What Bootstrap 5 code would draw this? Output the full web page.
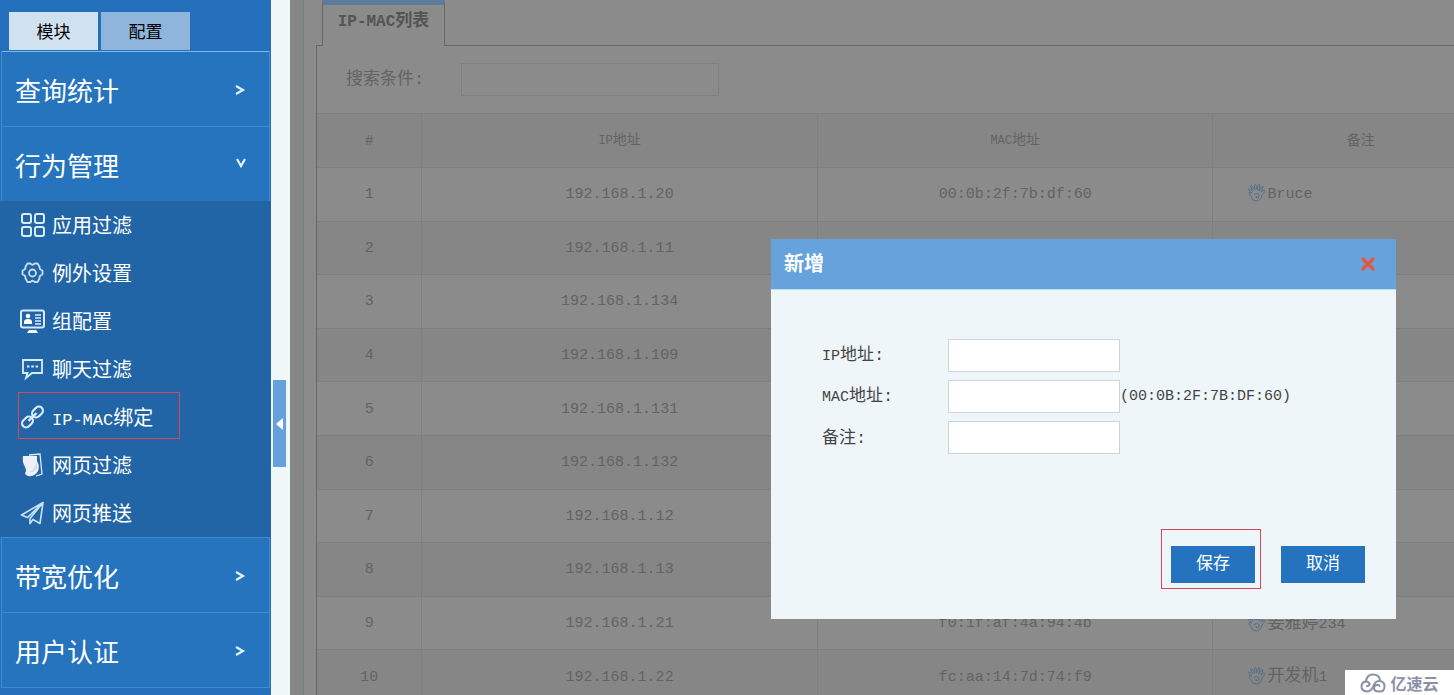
<!DOCTYPE html>
<html lang="zh-CN">
<head>
<meta charset="utf-8">
<meta name="viewport" content="width=device-width, initial-scale=1">
<title>IP-MAC绑定</title>
<link href="https://cdn.jsdelivr.net/npm/bootstrap@5.3.0/dist/css/bootstrap.min.css" rel="stylesheet">
<style>
body{font-family:"Liberation Mono","Noto Sans CJK SC",monospace;font-size:17px;line-height:24px;background:#8a8a8a;color:#333}
.lat{font-size:15px}
.sidebar{width:271px;background:#2570bd}
.side-tabs{height:51px;padding:12px 9px 0;gap:3px}
.side-tabs button{width:89px;height:38px;border:0;background:#90b5da;color:#000;padding:6px 0 0}
.side-tabs button.active{background:#d0e1ef}
.side-menu{border:1px solid #4189d2;border-width:0 1px;margin:0 1px}
.menu-head{height:75px;border:0;border-top:1px solid #4189d2;background:#2673be;color:#fff;font:26px/36px "Noto Sans CJK SC",sans-serif;padding:2px 22px 0 13px}
.menu-head:first-child{border-top-color:#7bb8ee}
.submenu{background:#2165a6;margin:0 -2px}
.submenu a{height:48px;padding:0 0 0 20px;gap:7px;color:#fff;font-size:20px;text-decoration:none}
.submenu a span{padding-top:6px}
.submenu .lat{font-size:17px}
.submenu svg{width:25px;height:25px;flex:none}
.marked::after{content:"";position:absolute;border:1px solid #d9455a;pointer-events:none}
.submenu .marked::after{left:18px;top:-1px;width:162px;height:47px}
.gutter{width:19px;background:#eff8f7}
.handle{width:13px;height:87px;margin:380px 0 0 2px;background:#67a1dd;border:0;padding:0}
.workspace{background:#8b8b8b;color:#636363}
.edge{width:14px;background:#868686;border-right:1px solid #7d7d7d}
.page-tabs{height:46px;padding-left:6px}
.page-tabs::before,.page-tabs::after{content:"";border-bottom:1px solid #686868}
.page-tabs::before{width:6px;margin-left:-6px}
.page-tabs::after{flex:1}
.page-tabs button{width:123px;border:1px solid #686868;border-width:5px 1px 0;border-top-color:#5c7c99;background:none;color:#545454;font-size:17px;font-weight:bold;padding:0 0 8px}
.page-tabs .lat{font-size:16px}
.panel{margin-left:12px}
.panel-main{border-left:1px solid #686868}
.search{height:67px;padding-left:29px}
.search label{width:115px}
.search input{width:258px;height:33px;border:1px solid #808080;border-radius:0;background:transparent}
.ip-table{width:calc(100% + 55px);height:591px;table-layout:fixed;text-align:center;font-size:15px;border-collapse:collapse}
.ip-table th{height:54px;font-size:14px;font-weight:normal}
.ip-table th .lat{font-size:12px}
.ip-table th,.ip-table td{border:1px solid #7f7f7f;border-left:0;padding:0}
.ip-table td{height:53px;padding-top:2px}
.ip-table thead,.ip-table tbody tr:nth-child(even){background:#868686}
.ip-table td:last-child{text-align:left;padding-left:34px}
.ip-table .cjk{font-size:17px}
.ip-table svg{width:20px;height:19px;vertical-align:-4px}
.dialog-layer{padding:239px 58px 0 20px}
.dialog-box{width:625px;height:380px;background:#eef6f9;color:#444}
.dialog-head{height:51px;background:#66a3dc;border-bottom:1px solid #b9e2f5;padding:0 20px 0 13px;color:#fff}
.dialog-head h2{font-size:20px;font-weight:bold;margin:0;padding-top:4px}
.dialog-head button{width:16px;height:16px;padding:0;border:0;background:none}
.fields{padding:49px 0 0 51px;gap:8px}
.fields label{width:126px;padding-top:2px}
.fields input{width:172px;height:33px;border:1px solid #cdd3d8;border-radius:0;background:#fff;padding:4px 8px}
.actions{padding:0 31px 36px;gap:26px}
.actions button{width:84px;height:37px;border:0;background:#2573bf;color:#fff;padding:0}
.actions .marked::after{inset:-17px -6px -6px -10px}
.watermark{right:0;bottom:0;width:109px;height:25px;background:#fff;color:#8b91a5;font:bold 16px/24px "Noto Sans CJK SC",sans-serif}
</style>
<script src="https://cdn.jsdelivr.net/npm/bootstrap@5.3.0/dist/js/bootstrap.bundle.min.js"></script>
</head>
<body>
<div class="d-flex vh-100 overflow-hidden position-relative">
  <nav class="sidebar flex-shrink-0">
    <div class="side-tabs d-flex">
      <button class="active" type="button">模块</button>
      <button type="button">配置</button>
    </div>
    <div class="side-menu">
      <button class="menu-head w-100 d-flex align-items-center justify-content-between" type="button">查询统计<svg width="14" height="14" viewBox="0 0 14 14" fill="none" stroke="#e2f2ff" stroke-width="2.2"><path d="M3 3l7 4-7 4"/></svg></button>
      <button class="menu-head w-100 d-flex align-items-center justify-content-between" type="button">行为管理<svg width="14" height="14" viewBox="0 0 14 14" fill="none" stroke="#e2f2ff" stroke-width="2.2"><path d="M4 1l4 7 4-7"/></svg></button>
      <div class="submenu">
        <a href="#" class="d-flex align-items-center"><svg viewBox="0 0 25 25" fill="none" stroke="#d9ecff" stroke-width="2"><rect x="2" y="1" width="9" height="9" rx="2"/><rect x="15" y="1" width="9" height="9" rx="2"/><rect x="2" y="14" width="9" height="9" rx="2"/><rect x="15" y="14" width="9" height="9" rx="2"/></svg><span>应用过滤</span></a>
        <a href="#" class="d-flex align-items-center"><svg viewBox="0 0 25 25" fill="none" stroke="#c7e0fa" stroke-width="1.800" stroke-linejoin="round"><path d="M7.500 2.500h3q2 2.500 4 0h3l2 3q-.5 3 3 4v4q-3.500 1-3 4l-2 3.500h-3q-2-2.500-4 0h-3l-2-3.500q.5-3-3-4v-4q3.500-1 3-4z"/><circle cx="12.500" cy="12" r="3.500"/></svg><span>例外设置</span></a>
        <a href="#" class="d-flex align-items-center"><svg viewBox="0 0 25 25" fill="none" stroke="#d9ecff"><rect x="1" y="1.500" width="23" height="17" rx="2" stroke-width="2"/><circle cx="8" cy="7" r="2.300" fill="#fff" stroke="none"/><path d="M4 15v-2q0-3 4-3t4 3v2z" fill="#fff" stroke="none"/><path d="M15 6h6M15 9h6M15 12h6M15 15h6" stroke-width="1.300"/><path d="M9 21h7l2 3H7z" fill="#fff" stroke="none"/></svg><span>组配置</span></a>
        <a href="#" class="d-flex align-items-center"><svg viewBox="0 0 25 25" fill="none" stroke="#d9ecff" stroke-width="1.800"><path d="M3 3h19v13H12l-6 5 1.500-5H3z"/><path d="M7 9.500h2.500M11.300 9.500h2.500M15.600 9.500h2.500" stroke-width="2"/></svg><span>聊天过滤</span></a>
        <a href="#" class="d-flex align-items-center position-relative marked"><svg viewBox="0 0 25 25" fill="none" stroke="#d9ecff" stroke-width="2.200"><rect x="-6" y="-4" width="12" height="8" rx="4" transform="translate(17.500 7) rotate(-45)"/><rect x="-6" y="-4" width="12" height="8" rx="4" transform="translate(7.500 17) rotate(-45)"/><path d="M8.500 16l8-8" stroke-width="2.400"/></svg><span><span class="lat">IP-MAC</span>绑定</span></a>
        <a href="#" class="d-flex align-items-center"><svg viewBox="0 0 25 25"><path d="M9 2l11-1 2 20-6 2" fill="none" stroke="#d9ecff" stroke-width="1.300"/><path d="M3 3h14v5q3 5 1 10-3 6-10 5-3-1-3-3 2-2 0-6Q2 9 3 3z" fill="#edf1f7"/><path d="M16 9q3 5-1 9-3 2-7 1 7-1 8-10z" fill="#d9dde7"/></svg><span>网页过滤</span></a>
        <a href="#" class="d-flex align-items-center"><svg viewBox="0 0 25 25" fill="none" stroke="#c7e0fa" stroke-width="1.700" stroke-linejoin="round"><path d="M23 1.500L1.500 14l6 2.500L23 1.500l-3 21-7-4-3 4v-5L23 1.500"/></svg><span>网页推送</span></a>
      </div>
      <button class="menu-head w-100 d-flex align-items-center justify-content-between" type="button">带宽优化<svg width="14" height="14" viewBox="0 0 14 14" fill="none" stroke="#e2f2ff" stroke-width="2.2"><path d="M3 3l7 4-7 4"/></svg></button>
      <button class="menu-head w-100 d-flex align-items-center justify-content-between" type="button">用户认证<svg width="14" height="14" viewBox="0 0 14 14" fill="none" stroke="#e2f2ff" stroke-width="2.2"><path d="M3 3l7 4-7 4"/></svg></button>
      <div class="border-top" style="--bs-border-color:#4189d2"></div>
    </div>
  </nav>
  <div class="gutter flex-shrink-0">
    <button class="handle d-flex align-items-center justify-content-center" type="button" aria-label="收起菜单"><svg width="7" height="12" viewBox="0 0 7 12"><path d="M7 0v12L0 6z" fill="#fff"/></svg></button>
  </div>
  <main class="workspace flex-grow-1 d-flex position-relative overflow-hidden">
    <div class="edge flex-shrink-0"></div>
    <section class="panel flex-grow-1">
      <div class="page-tabs d-flex"><button type="button"><span class="lat">IP-MAC</span>列表</button></div>
      <div class="panel-main">
        <form class="search d-flex align-items-center">
          <label for="q">搜索条件:</label><input class="form-control" id="q" type="text">
        </form>
        <table class="ip-table">
          <colgroup><col style="width:8.8%"><col style="width:33.2%"><col style="width:33.2%"><col style="width:24.8%"></colgroup>
          <thead><tr><th>#</th><th><span class="lat">IP</span>地址</th><th><span class="lat">MAC</span>地址</th><th>备注</th></tr></thead>
          <tbody>
            <tr><td>1</td><td>192.168.1.20</td><td>00:0b:2f:7b:df:60</td><td><svg viewBox="0 0 20 19"><use href="#hand"/></svg>Bruce</td></tr>
            <tr><td>2</td><td>192.168.1.11</td><td></td><td></td></tr>
            <tr><td>3</td><td>192.168.1.134</td><td></td><td></td></tr>
            <tr><td>4</td><td>192.168.1.109</td><td></td><td></td></tr>
            <tr><td>5</td><td>192.168.1.131</td><td></td><td></td></tr>
            <tr><td>6</td><td>192.168.1.132</td><td></td><td></td></tr>
            <tr><td>7</td><td>192.168.1.12</td><td></td><td></td></tr>
            <tr><td>8</td><td>192.168.1.13</td><td></td><td></td></tr>
            <tr><td>9</td><td>192.168.1.21</td><td>f0:1f:af:4a:94:4b</td><td><svg viewBox="0 0 20 19"><use href="#hand"/></svg><span class="cjk">姜雅婷</span>234</td></tr>
            <tr><td>10</td><td>192.168.1.22</td><td>fc:aa:14:7d:74:f9</td><td><svg viewBox="0 0 20 19"><use href="#hand"/></svg><span class="cjk">开发机</span>1</td></tr>
          </tbody>
        </table>
      </div>
    </section>
    <div class="dialog-layer position-absolute top-0 end-0">
      <div class="dialog-box d-flex flex-column" role="dialog" aria-labelledby="dlg">
        <header class="dialog-head d-flex align-items-center justify-content-between">
          <h2 id="dlg">新增</h2>
          <button class="d-flex" type="button" aria-label="关闭"><svg width="16" height="16" viewBox="0 0 16 16" stroke="#e2573f" stroke-width="3.500" stroke-linecap="round"><path d="M3 3l10 10M13 3L3 13"/></svg></button>
        </header>
        <form class="fields d-flex flex-column flex-grow-1">
          <div class="d-flex align-items-center"><label for="ip"><span class="lat">IP</span>地址:</label><input class="form-control" id="ip" type="text"></div>
          <div class="d-flex align-items-center"><label for="mac"><span class="lat">MAC</span>地址:</label><input class="form-control" id="mac" type="text"><span class="lat">(00:0B:2F:7B:DF:60)</span></div>
          <div class="d-flex align-items-center"><label for="note">备注:</label><input class="form-control" id="note" type="text"></div>
        </form>
        <footer class="actions d-flex justify-content-end">
          <button class="position-relative marked" type="button">保存</button>
          <button type="button">取消</button>
        </footer>
      </div>
    </div>
  </main>
  <div class="watermark position-absolute d-flex align-items-center justify-content-center gap-1"><svg width="26" height="20" viewBox="0 0 26 20" fill="none" stroke="#8b91a5" stroke-width="2" stroke-linecap="round"><path d="M6 8q1-6.500 7-6.500 6 0 7 5.500"/><path d="M7 13q2.500 0 2.500-2T6 8.500Q1.500 9 1.500 13.500T7 18.500q3.500 0 6-4.500 2-6 6-6 5.500 0 5.500 5.500t-5.500 5q-5 0-5-3.500 0-2.500 2.500-3t3 1"/></svg>亿速云</div>
</div>
<svg width="0" height="0" class="position-absolute"><defs><g id="hand" fill="none" stroke="#55718a" stroke-width="1"><path d="M5 10L1.500 7q0-1.500 1.500-1l3 2L3.500 3.500Q4 2 5 3l3 4-.5-5q1-1.500 1.500 0l1 5 1.500-5.500q1.500-.5 1.200 1L12 8l3-4.500q1.300 0 .8 1.500L14 9l3-2q1.500 0 .8 1.500L15 12q-1 6-6 6-4.500-.5-5-4.500L2 11q-.5-1.500 1-1.500z"/><path d="M7 12q2-3 5-.5 1 3-2 3.500-2-1-.5-2"/></g></defs></svg>
</body>
</html>
